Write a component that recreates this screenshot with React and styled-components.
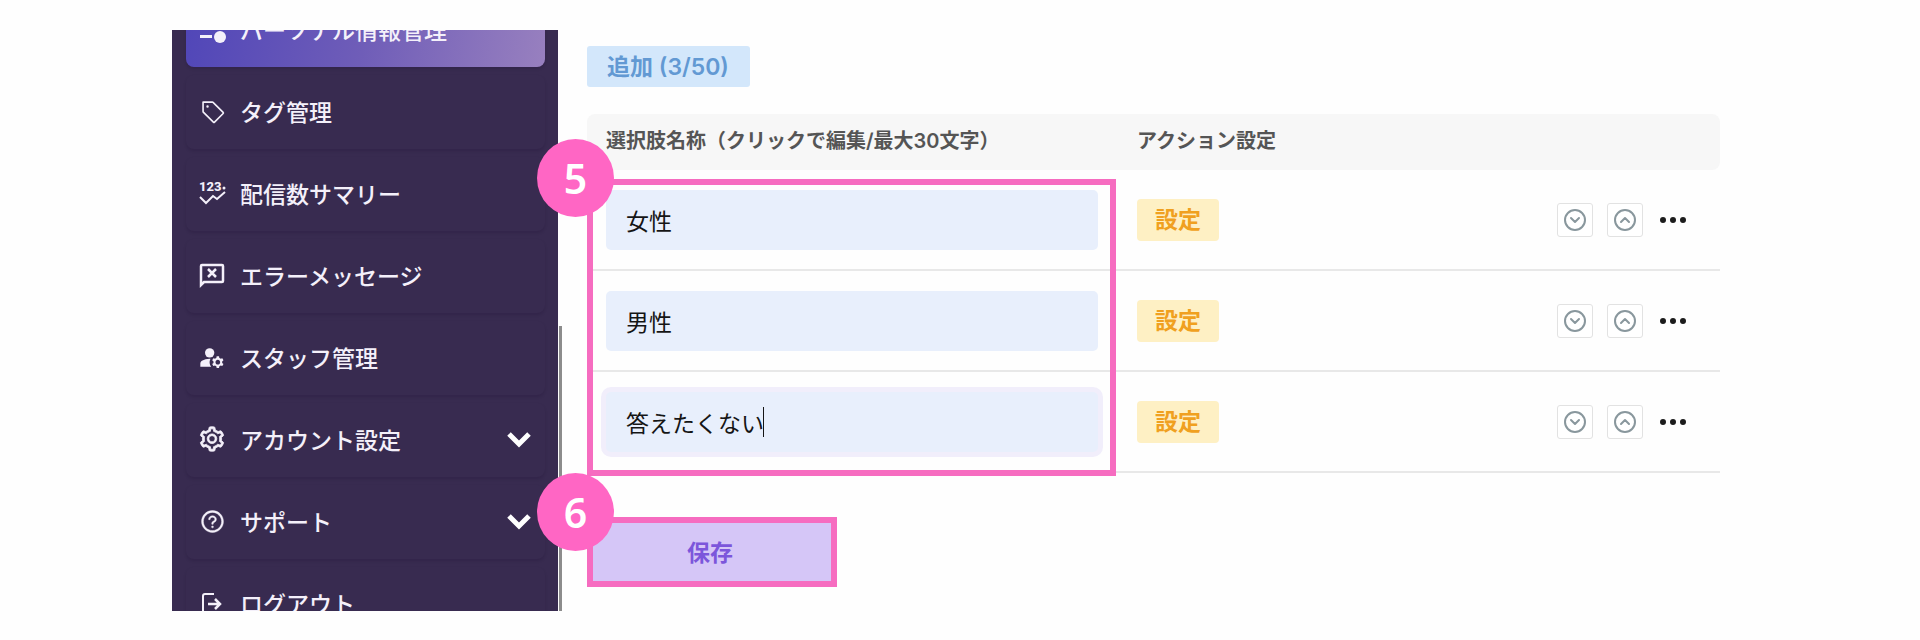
import React from 'react'
import styled, { createGlobalStyle } from 'styled-components'
import { PiTag } from 'react-icons/pi'
import { BsThreeDots } from 'react-icons/bs'
import { MdManageAccounts } from 'react-icons/md'
import { AiOutlineSetting, AiOutlineQuestionCircle } from 'react-icons/ai'
import { CircleChevronDown, CircleChevronUp } from 'lucide-react'

const ProfileIcon = () => (
    <svg viewBox='0 0 28 28' width='28' height='28' fill='currentColor'>
        <circle cx='7' cy='7' r='6' />
        <rect x='15' y='6' width='11' height='3' />
        <rect x='2' y='20' width='12' height='3' />
        <circle cx='22' cy='22' r='6' />
    </svg>
)

const SummaryIcon = () => (
    <svg viewBox='0 0 28 28' width='28' height='28' fill='none' stroke='currentColor' strokeWidth='2'>
        <text x='1' y='12' fontSize='13' fontWeight='800' fontFamily='Roboto' fill='currentColor' stroke='none'>123</text>
        <circle cx='26' cy='9' r='1.500' fill='currentColor' stroke='none' />
        <path d='M2 18l6 6 7-7 4 3 8-7' />
    </svg>
)

const ErrorIcon = () => (
    <svg viewBox='0 0 28 28' width='28' height='28' fill='none' stroke='currentColor' strokeWidth='2.500'>
        <path d='M3 24V5q0-1 1-1h20q1 0 1 1v15q0 1-1 1H6z' />
        <path d='M10 8l8 8m0-8l-8 8' />
    </svg>
)

const LogoutIcon = () => (
    <svg viewBox='0 0 28 28' width='28' height='28' fill='none' stroke='currentColor' strokeWidth='2'>
        <path d='M16 5H7q-2 0-2 2v16q0 2 2 2h9' />
        <path d='M10 15h12M17 10l5 5-5 5' strokeWidth='2.500' />
    </svg>
)

const menu = [
    { label: 'パーソナル情報管理', icon: <ProfileIcon />, active: true },
    { label: 'タグ管理', icon: <PiTag size={26} /> },
    { label: '配信数サマリー', icon: <SummaryIcon /> },
    { label: 'エラーメッセージ', icon: <ErrorIcon /> },
    { label: 'スタッフ管理', icon: <MdManageAccounts size={29} /> },
    { label: 'アカウント設定', icon: <AiOutlineSetting strokeWidth={28} />, open: true },
    { label: 'サポート', icon: <AiOutlineQuestionCircle size={25} strokeWidth={18} />, open: true },
    { label: 'ログアウト', icon: <LogoutIcon /> },
]

const choices = [
    { name: '女性' },
    { name: '男性' },
    { name: '答えたくない', focused: true },
]

const App = () => {
    return (
        <Page>
            <GlobalStyle />
            <Sidebar>
                <Menu>
                    {menu.map((item) => (
                        <MenuLink href='#' key={item.label} $active={item.active}>
                            <MenuIcon>{item.icon}</MenuIcon>
                            {item.label}
                            {item.open && (
                                <Arrow viewBox='0 0 24 24'>
                                    <path d='M2 7l10 10 10-10' />
                                </Arrow>
                            )}
                        </MenuLink>
                    ))}
                </Menu>
            </Sidebar>
            <ScrollTrack>
                <ScrollThumb />
            </ScrollTrack>
            <Main>
                <AddButton>追加 (3/50)</AddButton>
                <TableArea>
                    <Table>
                        <thead>
                            <tr>
                                <HeadCell $wide>選択肢名称（クリックで編集/最大30文字）</HeadCell>
                                <HeadCell>アクション設定</HeadCell>
                                <HeadCell />
                            </tr>
                        </thead>
                        <tbody>
                            {choices.map((choice) => (
                                <tr key={choice.name}>
                                    <Cell>
                                        <Field>
                                            <NameInput
                                                aria-label='選択肢名称'
                                                defaultValue={choice.name}
                                                $focused={choice.focused}
                                            />
                                            {choice.focused && <Caret />}
                                        </Field>
                                    </Cell>
                                    <Cell>
                                        <SetButton>設定</SetButton>
                                    </Cell>
                                    <Cell>
                                        <Tools>
                                            <MoveButton aria-label='下へ'><CircleChevronDown /></MoveButton>
                                            <MoveButton aria-label='上へ'><CircleChevronUp /></MoveButton>
                                            <MoreButton aria-label='メニュー'><BsThreeDots /></MoreButton>
                                        </Tools>
                                    </Cell>
                                </tr>
                            ))}
                        </tbody>
                    </Table>
                    <ListMark><Step $top='-46px'>5</Step></ListMark>
                </TableArea>
                <SaveArea>
                    <SaveButton>保存</SaveButton>
                    <SaveMark><Step $top='-50px'>6</Step></SaveMark>
                </SaveArea>
            </Main>
        </Page>
    )
}

export default App


const GlobalStyle = createGlobalStyle`
    * {
        box-sizing: border-box;
    }

    body {
        margin: 0;
        background-color: #fefefe;
        font-family: Inter, 'Noto Sans CJK JP', sans-serif;
    }

    button, input {
        font-family: inherit;
        border: none;
    }
`

const Page = styled.div`
    display: flex;
    height: 100vh;
    padding: 30px 200px 29px 172px;
`

const Sidebar = styled.aside`
    flex: none;
    width: 386px;
    padding: 0 13px 0 14px;
    background-color: #382b50;
    overflow: hidden;
`

/* the list is scrolled down, so the first link is half out of view */
const Menu = styled.nav`
    display: flex;
    flex-direction: column;
    gap: 8px;
    margin-top: -37px;
`

const MenuLink = styled.a`
    display: flex;
    flex: none;
    align-items: center;
    gap: 14px;
    height: 74px;
    padding: 0 14px 2px 12px;
    border-radius: 8px;
    background: ${(props) => (props.$active ? 'linear-gradient(100deg, #5046b8, #6f5db8 50%, #9880bf)' : 'none')};
    box-shadow: 0 2px 3px rgba(20, 10, 40, 0.15);
    color: #f4f0fa;
    font-size: 23px;
    font-weight: 500;
    text-decoration: none;
`

const MenuIcon = styled.span`
    display: flex;
    justify-content: center;
    width: 28px;
    font-size: 28px;
`

const Arrow = styled.svg`
    width: 24px;
    height: 24px;
    margin-left: auto;
    fill: none;
    stroke: #fff;
    stroke-width: 5px;
`

const ScrollTrack = styled.div`
    display: flex;
    flex: none;
    align-items: flex-end;
    width: 4px;
`

const ScrollThumb = styled.div`
    width: 3px;
    height: 49%;
    margin-left: 1px;
    background-color: #8c8c8c;
`

const Main = styled.main`
    flex: 1;
    padding: 16px 0 0 25px;
`

const AddButton = styled.button`
    display: block;
    height: 41px;
    padding: 0 21px 3px 20px;
    border-radius: 3px;
    background-color: #d3e7fb;
    color: #6299d3;
    font-size: 23px;
    font-weight: 600;
`

const TableArea = styled.div`
    position: relative;
    margin-top: 27px;
`

const Table = styled.table`
    width: 100%;
    border-spacing: 0;
`

const HeadCell = styled.th`
    width: ${(props) => (props.$wide ? '531px' : 'auto')};
    height: 56px;
    padding: 0 20px 5px 19px;
    background-color: #f7f7f7;
    color: #555;
    font-size: 20px;
    font-weight: 600;
    text-align: left;
    white-space: nowrap;

    &:first-child {
        border-radius: 8px 0 0 8px;
    }

    &:last-child {
        border-radius: 0 8px 8px 0;
    }
`

const Cell = styled.td`
    height: 101px;
    padding: 0 20px 0 19px;
    border-bottom: 2px solid #e8e8e8;
`

const Field = styled.div`
    position: relative;
`

const NameInput = styled.input`
    display: block;
    width: 100%;
    height: 60px;
    padding: 0 20px;
    border-radius: 5px;
    outline: none;
    background-color: #e8effc;
    box-shadow: ${(props) => (props.$focused ? '0 0 0 5px #f1eefb' : 'none')};
    color: #151515;
    font-size: 23px;
`

const Caret = styled.span`
    position: absolute;
    top: 15px;
    left: 157px;
    width: 1px;
    height: 30px;
    background-color: #151515;
`

const SetButton = styled.button`
    height: 42px;
    padding: 0 18px 3px;
    border-radius: 4px;
    background-color: #fef0c4;
    color: #f0a020;
    font-size: 23px;
    font-weight: 700;
`

const Tools = styled.div`
    display: flex;
    justify-content: flex-end;
    align-items: center;
    gap: 14px;
    padding-right: 11px;
`

const MoveButton = styled.button`
    display: flex;
    align-items: center;
    justify-content: center;
    width: 36px;
    height: 34px;
    padding: 0;
    border: 1px solid #e2e2e2;
    border-radius: 3px;
    background-color: #fff;
    color: #89979d;
`

const MoreButton = styled.button`
    display: flex;
    padding: 0;
    background: none;
    color: #1c1c1c;
    font-size: 32px;
`

const ListMark = styled.div`
    position: absolute;
    top: 65px;
    left: 0;
    width: 529px;
    height: 297px;
    border: 6px solid #f66cc0;
    pointer-events: none;
`

const SaveArea = styled.div`
    position: relative;
    width: 250px;
    margin-top: 44px;
`

const SaveButton = styled.button`
    display: block;
    width: 246px;
    height: 70px;
    padding: 0 6px 3px;
    border-radius: 5px;
    background-color: #d5c6f7;
    color: #7c56db;
    font-size: 23px;
    font-weight: 600;
`

const SaveMark = styled.div`
    position: absolute;
    inset: 0;
    border: 6px solid #f66cc0;
    pointer-events: none;
`

const Step = styled.span`
    position: absolute;
    top: ${(props) => props.$top};
    left: -56px;
    display: flex;
    align-items: center;
    justify-content: center;
    width: 77px;
    height: 78px;
    border-radius: 50%;
    background-color: #ff66c4;
    color: #fff;
    font-family: 'Noto Sans', sans-serif;
    font-size: 41px;
    font-weight: 600;
`
